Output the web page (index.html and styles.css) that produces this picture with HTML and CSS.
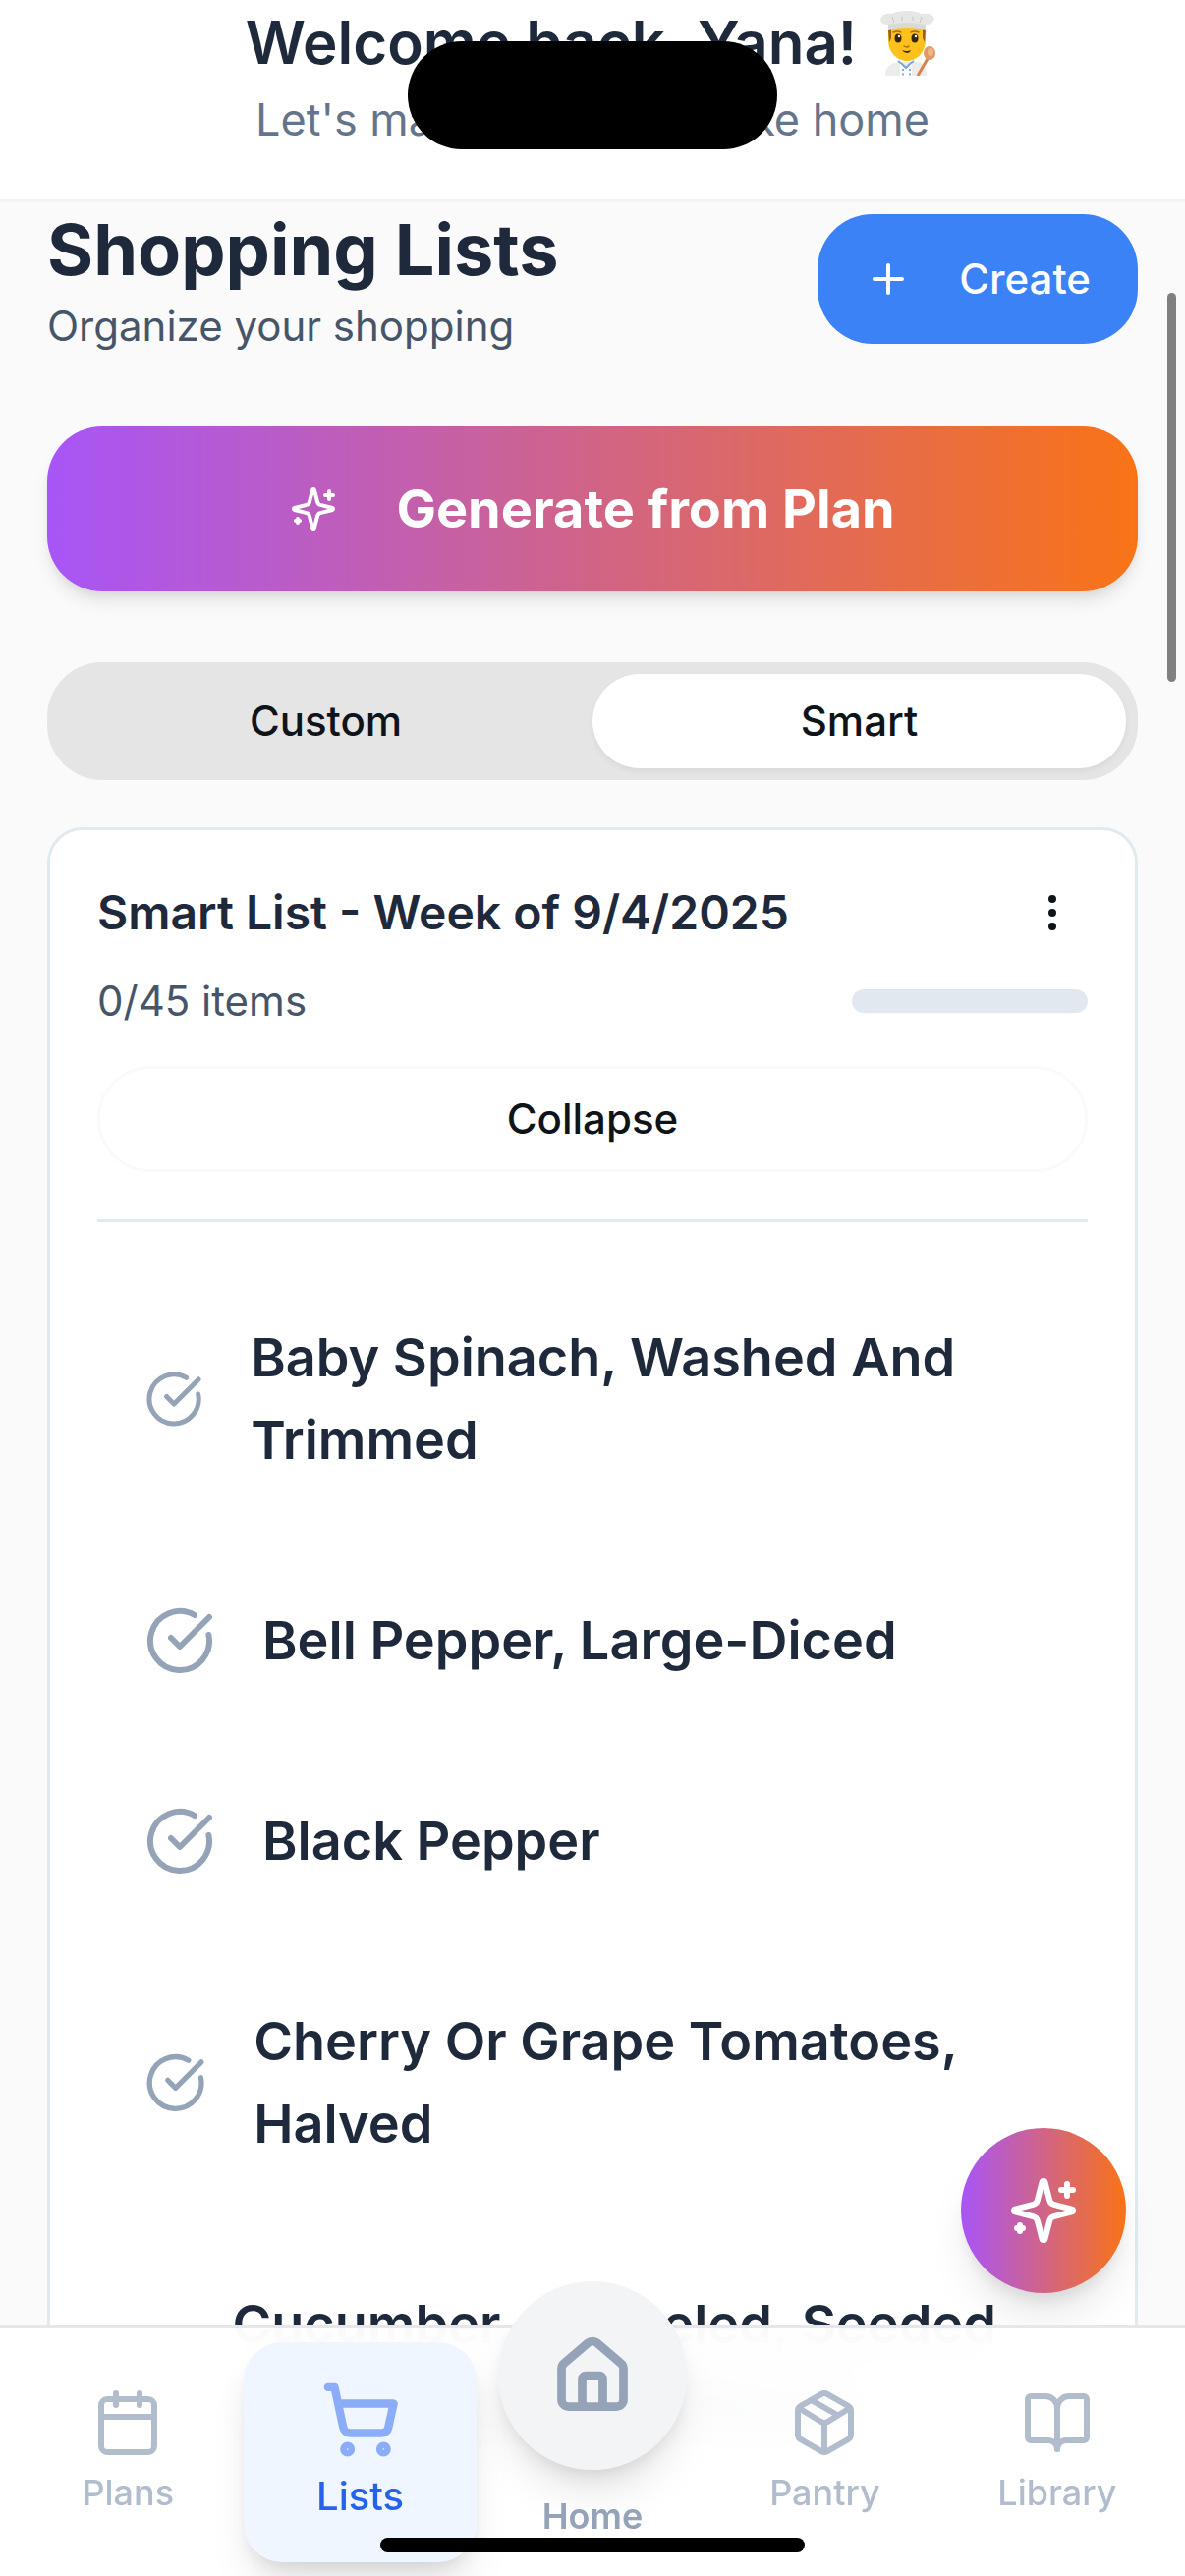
FILE: index.html
```
<!DOCTYPE html>
<html lang="en">
<head>
    <meta charset="UTF-8">
    <meta name="viewport" content="width=device-width, initial-scale=1.0">
    <title>Shopping Lists</title>
    <link rel="stylesheet" href="styles.css">
</head>
<body>
    <!-- Shared icon shapes -->
    <svg class="icon-defs" aria-hidden="true">
        <symbol id="icon-sparkles" viewBox="0 0 24 24">
            <path d="M9.937 15.5A2 2 0 0 0 8.5 14.063l-6.135-1.582a.5.5 0 0 1 0-.962L8.5 9.936A2 2 0 0 0 9.937 8.5l1.582-6.135a.5.5 0 0 1 .963 0L14.063 8.5A2 2 0 0 0 15.5 9.937l6.135 1.581a.5.5 0 0 1 0 .964L15.5 14.063a2 2 0 0 0-1.437 1.437l-1.582 6.135a.5.5 0 0 1-.963 0z"/>
            <path d="M20 3v4M22 5h-4M4 17v2M5 18H3"/>
        </symbol>
        <symbol id="icon-check" viewBox="0 0 24 24">
            <path d="M21.801 10A10 10 0 1 1 17 3.335"/>
            <path d="m9 11 3 3L22 4"/>
        </symbol>
    </svg>

    <header class="welcome">
        <h2 class="welcome-title">
            Welcome back, Yana!
            <svg class="chef" viewBox="0 0 60 66" role="img" aria-label="Cook">
                <path fill="#ececea" d="M5 66c0-9 5-13 15-14h18c7 1 9 6 9 14z"/>
                <path fill="#fff" d="M20 51l6 6 6-6v15H20z"/>
                <path fill="none" stroke="#7aa5dd" stroke-width="2" d="M18 51l4 3 4 4 4-4 4-3"/>
                <path fill="none" stroke="#5b8fd6" stroke-width="1.5" stroke-dasharray="2 2.5" d="M23 59v7M30 59v7"/>
                <path fill="#fcc21b" d="M8 18h38v12c0 11-8 21-19 21S8 41 8 30z"/>
                <path fill="#9a5f12" d="M8 19h3v9l-2 4zM46 19h-3v9l2 4z"/>
                <ellipse cx="18" cy="28" rx="3.5" ry="4.5" fill="#3b2410"/>
                <ellipse cx="35" cy="28" rx="3.5" ry="4.5" fill="#3b2410"/>
                <circle cx="19" cy="26" r="1.2" fill="#fff"/>
                <circle cx="36" cy="26" r="1.2" fill="#fff"/>
                <path fill="none" stroke="#a8700f" stroke-width="1.5" stroke-linecap="round" d="M13 22q5-2 8 0M31 22q4-2 8 0M24 36q3 2 5 0"/>
                <path fill="#4d2708" d="M22 40q5 2 9 0-1 3-4 3t-5-3z"/>
                <path fill="#d9d9d7" d="M8 11h38v9q-19-4-38 0z"/>
                <path fill="#e6e6e4" d="M0 8C2 3 8 2 12 3c4-4 25-4 29 0 6-1 13 0 14 5-1 4-5 6-9 6q-19-4-38 0C3 14 0 12 0 8z"/>
                <path fill="none" stroke="#c4c4c2" stroke-width="1" d="M12 6l2 6M22 6v4M33 6v4M42 6l-2 6"/>
                <path fill="none" stroke="#d4854f" stroke-width="3" d="M49 47L38 66"/>
                <ellipse cx="50" cy="43" rx="6" ry="7" fill="#e09a67"/>
                <ellipse cx="51" cy="42" rx="3" ry="4" fill="#f0b78c"/>
            </svg>
        </h2>
        <p class="welcome-text">Let's make dinner feel like home</p>
    </header>

    <main class="content">
        <div class="page-header">
            <div>
                <h1 class="page-title">Shopping Lists</h1>
                <p class="page-subtitle">Organize your shopping</p>
            </div>
            <button class="create-button" type="button">
                <svg class="icon icon-small" viewBox="0 0 24 24"><path d="M5 12h14M12 5v14"/></svg>
                Create
            </button>
        </div>

        <button class="generate-button" type="button">
            <svg class="icon icon-small"><use href="#icon-sparkles"/></svg>
            Generate from Plan
        </button>

        <div class="tabs" role="tablist">
            <button class="tab" type="button" role="tab" aria-selected="false">Custom</button>
            <button class="tab tab-active" type="button" role="tab" aria-selected="true">Smart</button>
        </div>

        <section class="card">
            <div class="card-header">
                <h3 class="card-title">Smart List - Week of 9/4/2025</h3>
                <button class="menu-button" type="button" aria-label="List options">
                    <svg class="icon icon-small" viewBox="0 0 24 24"><circle cx="12" cy="5" r="1"/><circle cx="12" cy="12" r="1"/><circle cx="12" cy="19" r="1"/></svg>
                </button>
            </div>
            <div class="card-progress">
                <span>0/45 items</span>
                <div class="progress-bar"></div>
            </div>
            <button class="collapse-button" type="button">Collapse</button>

            <ul class="items">
                <li>
                    <button class="item" type="button">
                        <svg class="icon item-icon"><use href="#icon-check"/></svg>
                        <span>Baby Spinach, Washed And Trimmed</span>
                    </button>
                </li>
                <li>
                    <button class="item" type="button">
                        <svg class="icon item-icon"><use href="#icon-check"/></svg>
                        <span>Bell Pepper, Large-Diced</span>
                    </button>
                </li>
                <li>
                    <button class="item" type="button">
                        <svg class="icon item-icon"><use href="#icon-check"/></svg>
                        <span>Black Pepper</span>
                    </button>
                </li>
                <li>
                    <button class="item" type="button">
                        <svg class="icon item-icon"><use href="#icon-check"/></svg>
                        <span>Cherry Or Grape Tomatoes, Halved</span>
                    </button>
                </li>
                <li>
                    <button class="item" type="button">
                        <svg class="icon item-icon"><use href="#icon-check"/></svg>
                        <span>Cucumber, Unpeeled, Seeded And Cut Into Half Moons</span>
                    </button>
                </li>
            </ul>
        </section>
    </main>

    <button class="assistant-button" type="button" aria-label="Assistant">
        <svg class="icon icon-medium"><use href="#icon-sparkles"/></svg>
    </button>

    <nav class="bottom-nav">
        <a class="nav-item" href="#">
            <svg class="icon icon-medium" viewBox="0 0 24 24"><path d="M8 2v4M16 2v4"/><rect x="3" y="4" width="18" height="18" rx="2"/><path d="M3 10h18"/></svg>
            Plans
        </a>
        <a class="nav-item nav-active" href="#">
            <svg class="icon" viewBox="0 0 24 24"><circle cx="8" cy="21" r="1"/><circle cx="19" cy="21" r="1"/><path d="M2.05 2.05h2l2.66 12.42a2 2 0 0 0 2 1.58h9.78a2 2 0 0 0 1.95-1.57l1.65-7.43H5.12"/></svg>
            Lists
        </a>
        <a class="nav-item nav-home" href="#">
            <span class="home-circle">
                <svg class="icon" viewBox="0 0 24 24"><path d="M15 21v-8a1 1 0 0 0-1-1h-4a1 1 0 0 0-1 1v8"/><path d="M3 10a2 2 0 0 1 .709-1.528l7-5.999a2 2 0 0 1 2.582 0l7 5.999A2 2 0 0 1 21 10v9a2 2 0 0 1-2 2H5a2 2 0 0 1-2-2z"/></svg>
            </span>
            Home
        </a>
        <a class="nav-item" href="#">
            <svg class="icon icon-medium" viewBox="0 0 24 24"><path d="M11 21.73a2 2 0 0 0 2 0l7-4A2 2 0 0 0 21 16V8a2 2 0 0 0-1-1.73l-7-4a2 2 0 0 0-2 0l-7 4A2 2 0 0 0 3 8v8a2 2 0 0 0 1 1.73z"/><path d="M12 22V12"/><path d="m3.3 7 7.703 4.734a2 2 0 0 0 1.994 0L20.7 7"/><path d="m7.5 4.27 9 5.15"/></svg>
            Pantry
        </a>
        <a class="nav-item" href="#">
            <svg class="icon icon-medium" viewBox="0 0 24 24"><path d="M12 7v14"/><path d="M3 18a1 1 0 0 1-1-1V4a1 1 0 0 1 1-1h5a4 4 0 0 1 4 4 4 4 0 0 1 4-4h5a1 1 0 0 1 1 1v13a1 1 0 0 1-1 1h-6a3 3 0 0 0-3 3 3 3 0 0 0-3-3z"/></svg>
            Library
        </a>
    </nav>

    <!-- Device overlays -->
    <div class="dynamic-island"></div>
    <div class="scroll-thumb"></div>
    <div class="home-indicator"></div>
</body>
</html>
```
FILE: styles.css
```
* {
    box-sizing: border-box;
    margin: 0;
    padding: 0;
}

body {
    font-family: Inter, "Liberation Sans", sans-serif;
    font-size: 42px;
    line-height: 60px;
    color: #1e293b;
    background-color: #fafafa;
    height: 100vh;
    overflow: hidden;
}

button {
    font: inherit;
    border: none;
    background: none;
    color: inherit;
    cursor: pointer;
}

a {
    color: inherit;
    text-decoration: none;
}

/* Icons */
.icon-defs {
    display: none;
}

.icon {
    fill: none;
    stroke: currentColor;
    stroke-width: 2;
    stroke-linecap: round;
    stroke-linejoin: round;
}

.icon-small {
    width: 48px;
    height: 48px;
}

.icon-medium {
    width: 72px;
    height: 72px;
}

/* Welcome bar */
.welcome {
    padding: 7px 48px 48px;
    text-align: center;
    background-color: #fff;
    border-bottom: 3px solid #f1f5f9;
}

.welcome-title {
    display: flex;
    justify-content: center;
    gap: 24px;
    font-size: 60px;
    font-weight: 600;
    line-height: 72px;
}

.chef {
    width: 60px;
    height: 66px;
    margin-top: 4px;
}

.welcome-text {
    margin-top: 10px;
    font-size: 45px;
    line-height: 66px;
    color: #64748b;
}

/* Page content */
.content {
    padding: 0 48px;
}

.page-header {
    display: flex;
    justify-content: space-between;
    align-items: center;
}

.page-title {
    font-size: 72px;
    font-weight: 700;
    line-height: 96px;
}

.page-subtitle {
    color: #475569;
}

.create-button {
    display: flex;
    align-items: center;
    gap: 48px;
    height: 132px;
    padding: 0 48px;
    border-radius: 56px;
    font-weight: 500;
    color: #fff;
    background-color: #3b82f6;
}

.generate-button {
    display: flex;
    justify-content: center;
    align-items: center;
    gap: 60px;
    width: 100%;
    height: 168px;
    margin: 72px 0;
    border-radius: 56px;
    font-size: 54px;
    font-weight: 700;
    color: #fff;
    background-image: linear-gradient(to right, #a855f7, #f97316);
    box-shadow: 0 12px 18px -3px rgba(0, 0, 0, 0.1), 0 6px 12px -6px rgba(0, 0, 0, 0.1);
}

.tabs {
    display: flex;
    height: 120px;
    padding: 12px;
    margin-bottom: 48px;
    border-radius: 56px;
    background-color: #e5e5e5;
}

.tab {
    flex: 1;
    border-radius: 48px;
    font-weight: 500;
    color: #0f1419;
}

.tab-active {
    background-color: #fff;
    box-shadow: 0 3px 6px rgba(0, 0, 0, 0.06);
}

/* List card */
.card {
    padding: 48px;
    border: 3px solid #e1eaee;
    border-radius: 36px;
    background-color: #fff;
}

.card-header,
.card-progress {
    display: flex;
    justify-content: space-between;
    align-items: center;
}

.card-title {
    font-size: 48px;
    font-weight: 600;
    line-height: 72px;
}

.menu-button {
    display: flex;
    justify-content: center;
    align-items: center;
    width: 72px;
    height: 72px;
    color: #0f1419;
}

.card-progress {
    margin: 24px 0 36px;
    color: #475569;
}

.progress-bar {
    width: 240px;
    height: 24px;
    border-radius: 12px;
    background-color: #e2e8f0;
}

.collapse-button {
    width: 100%;
    height: 108px;
    border: 3px solid #f8fafb;
    border-radius: 54px;
    font-weight: 500;
    color: #0f1419;
}

.items {
    margin-top: 48px;
    padding-top: 36px;
    border-top: 3px solid #e1eaee;
    list-style: none;
}

.item {
    display: flex;
    align-items: center;
    gap: 48px;
    width: 100%;
    padding: 60px 48px;
    font-size: 54px;
    font-weight: 600;
    line-height: 84px;
    text-align: left;
}

.item-icon {
    width: 72px;
    height: 72px;
    color: #94a3b8;
}

/* Floating assistant button */
.assistant-button {
    position: fixed;
    right: 60px;
    bottom: 288px;
    display: flex;
    justify-content: center;
    align-items: center;
    width: 168px;
    height: 168px;
    border-radius: 50%;
    color: #fff;
    background-image: linear-gradient(to right, #a855f7, #f97316);
    box-shadow: 0 30px 45px -9px rgba(0, 0, 0, 0.1), 0 12px 18px -6px rgba(0, 0, 0, 0.1);
}

/* Bottom navigation */
.bottom-nav {
    position: fixed;
    left: 0;
    right: 0;
    bottom: 0;
    display: flex;
    height: 255px;
    padding: 14px 12px;
    border-top: 3px solid #e5e7eb;
    font-size: 36px;
    font-weight: 500;
    line-height: 48px;
    background-color: rgba(255, 255, 255, 0.95);
    backdrop-filter: blur(24px);
}

.nav-item {
    flex: 1;
    display: flex;
    flex-direction: column;
    align-items: center;
    gap: 11px;
    padding-top: 46px;
    color: #b1bdcd;
}

.nav-active {
    gap: 14px;
    padding-top: 39px;
    border-radius: 39px;
    font-size: 40px;
    color: #2563eb;
    background-color: #eff6ff;
    box-shadow: 0 30px 45px -9px rgba(0, 0, 0, 0.1), 0 12px 18px -6px rgba(0, 0, 0, 0.1);
}

.nav-active .icon {
    width: 80px;
    height: 80px;
    stroke-width: 2.5;
    color: #8badf8;
}

.nav-home {
    gap: 23px;
    padding-top: 0;
    margin-top: -62px;
    font-weight: 600;
    color: #94a3b8;
}

.nav-home .icon {
    width: 84px;
    height: 84px;
    stroke-width: 2.5;
}

.home-circle {
    display: flex;
    justify-content: center;
    align-items: center;
    width: 192px;
    height: 192px;
    border-radius: 50%;
    background-color: #f3f4f6;
    box-shadow: 0 30px 45px -9px rgba(0, 0, 0, 0.1), 0 12px 18px -6px rgba(0, 0, 0, 0.1);
}

/* Device overlays */
.dynamic-island {
    position: fixed;
    top: 42px;
    left: 50%;
    width: 376px;
    height: 110px;
    margin-left: -188px;
    border-radius: 55px;
    background-color: #000;
}

.scroll-thumb {
    position: fixed;
    top: 298px;
    right: 9px;
    width: 9px;
    height: 396px;
    border-radius: 5px;
    background-color: #808080;
}

.home-indicator {
    position: fixed;
    bottom: 24px;
    left: 50%;
    width: 432px;
    height: 15px;
    margin-left: -216px;
    border-radius: 8px;
    background-color: #000;
}
```
